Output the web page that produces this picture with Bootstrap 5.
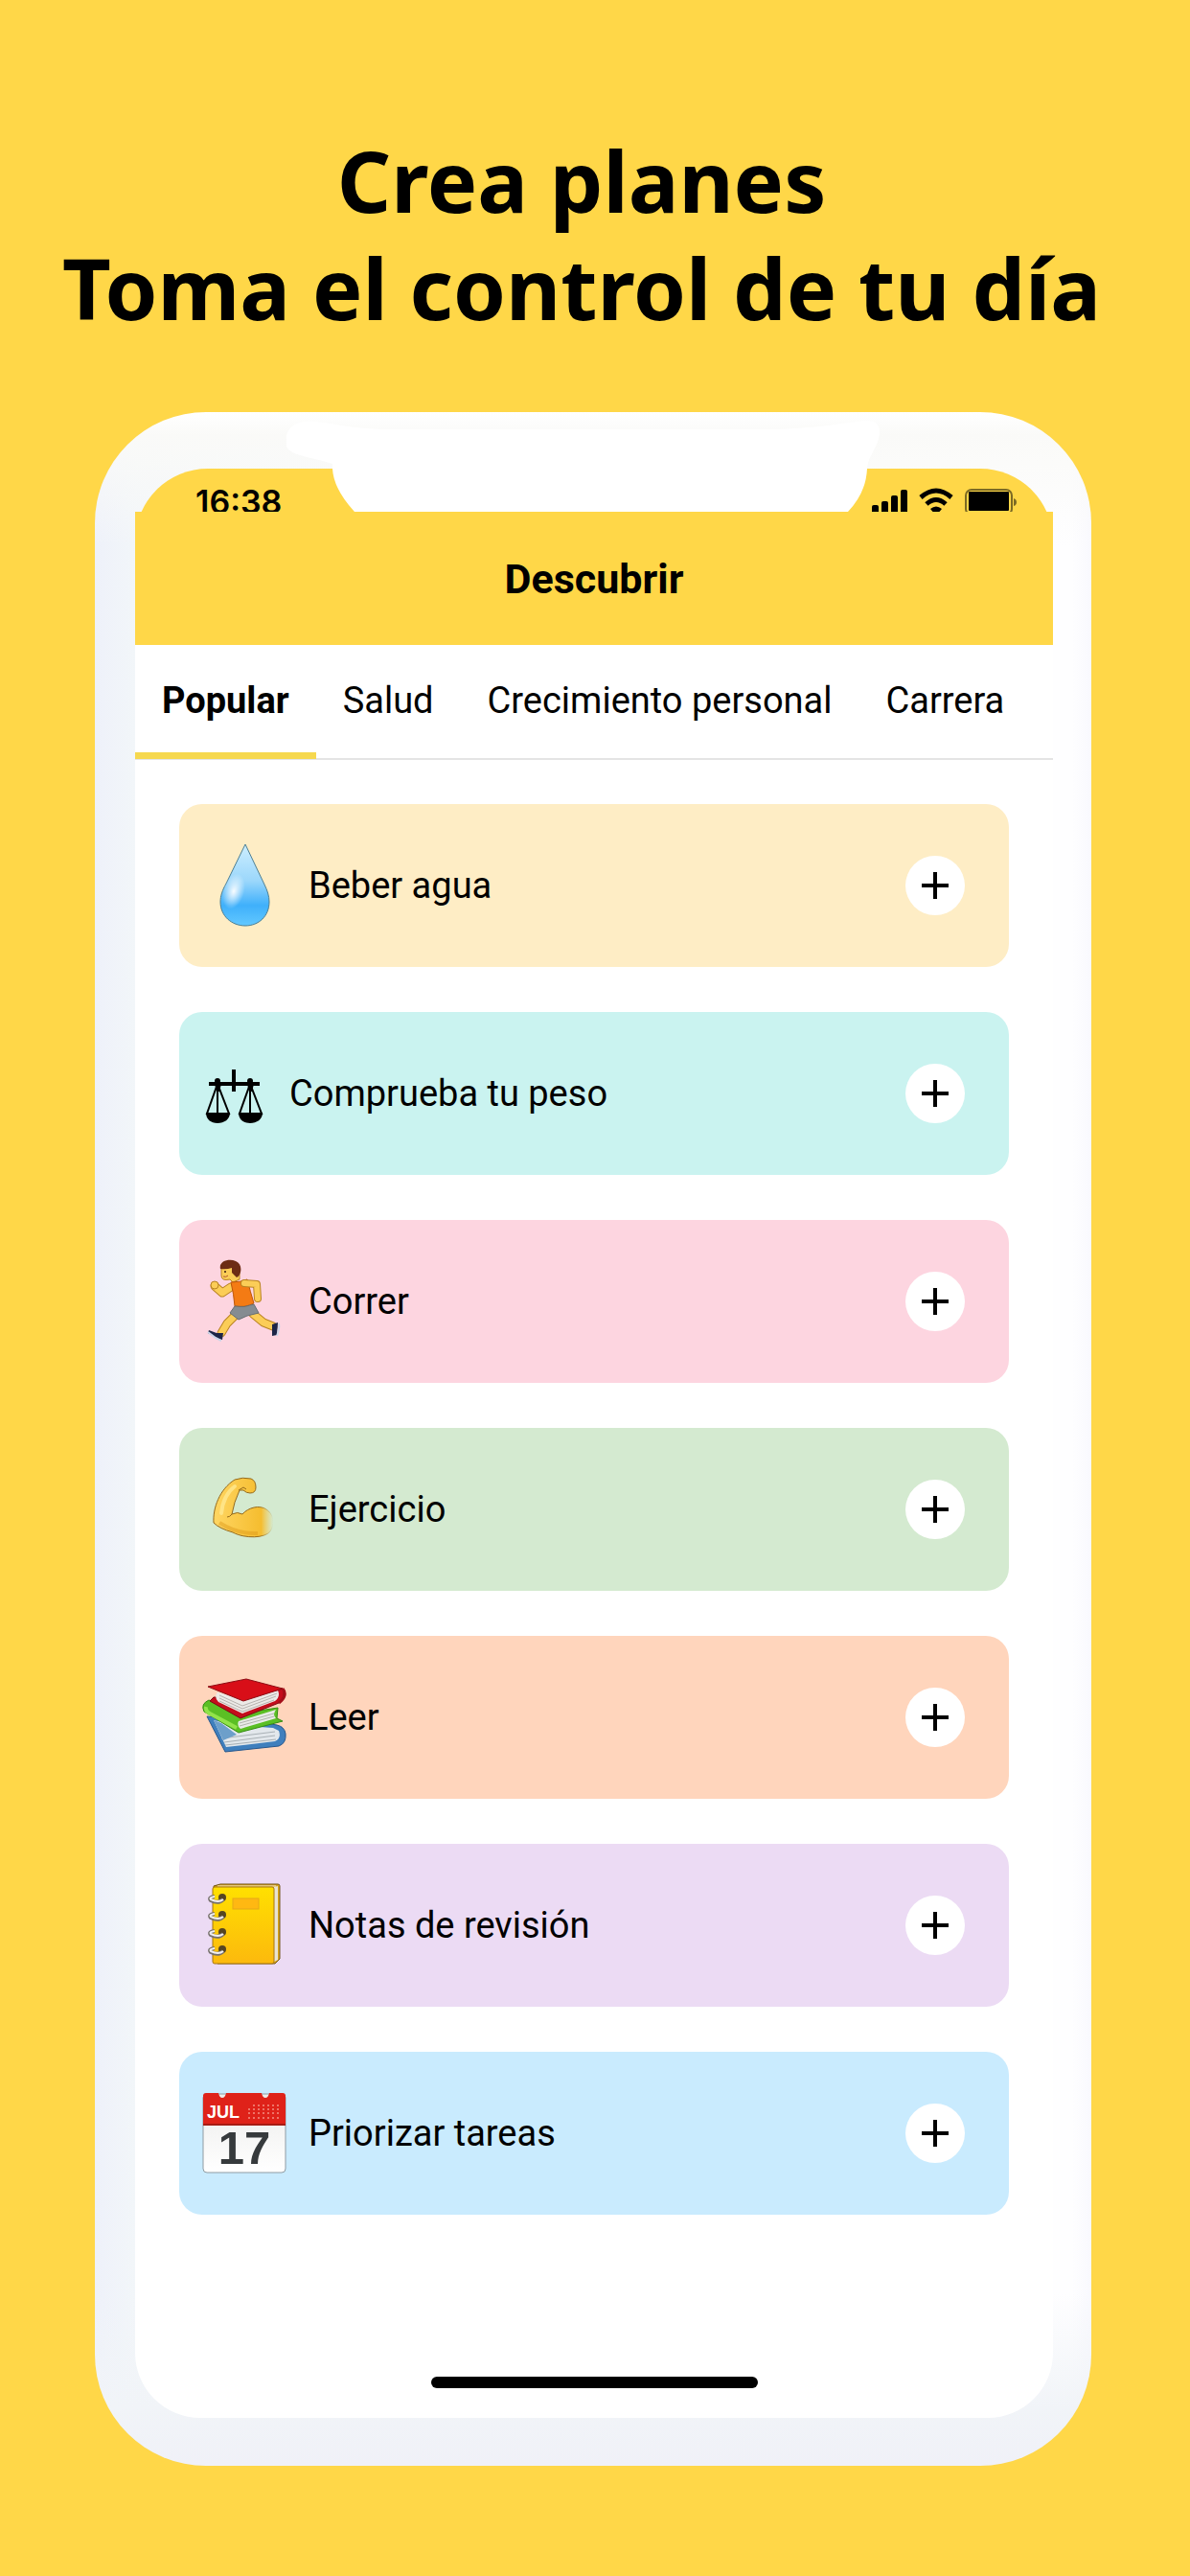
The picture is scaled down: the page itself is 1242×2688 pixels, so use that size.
<!DOCTYPE html>
<html lang="es">
<head>
<meta charset="utf-8">
<meta name="viewport" content="width=device-width, initial-scale=1">
<title>Crea planes</title>
<link href="https://cdn.jsdelivr.net/npm/bootstrap@5.3.0/dist/css/bootstrap.min.css" rel="stylesheet">
<style>
  :root { --sun: #ffd748; }
  body { background: var(--sun); color: #000; font-family: Roboto, sans-serif; }
  .promo { padding: 132px 28px 0 0; font-family: "Noto Sans", "Open Sans", sans-serif; font-size: 88px; line-height: 112px; font-weight: 700; }
  .stage { padding: 74px 103px 115px 99px; }
  .phone { padding: 59px 40px 50px 42px; border-radius: 116px;
    background: linear-gradient(to bottom, #fff 0, #fafaf8 24px, rgba(250,250,248,0) 140px),
      linear-gradient(to top, #f0f1f8 0, #f1f4f8 60px, rgba(241,244,248,0) 180px),
      linear-gradient(to right, #eef1fa 0, #f2f6f9 42px, #fefeff 50%, #fefeff 98%, #f9f9fe 100%); }
  .status-clip { height: 45px; overflow: hidden; }
  .status-bar { height: 80px; padding: 17px 37px 0 63px; border-radius: 76px 76px 0 0; background: var(--sun); }
  .clock { font-family: Inter, sans-serif; font-size: 34px; line-height: 36px; font-weight: 600; }
  .notch { top: 0; left: 50%; transform: translateX(-50%); }
  .screen { background: #fff; border-radius: 0 0 68px 68px; overflow: hidden; }
  .app-title { background: var(--sun); padding: 46px 0 45px; font-size: 43px; line-height: 48px; font-weight: 700; }
  .tabs { border-bottom: 2px solid #e4e4e4; }
  .tabs .nav-link { padding: 35px 28px 31px; font-size: 38px; line-height: 46px; color: #000; border-bottom: 7px solid transparent; white-space: nowrap; margin-bottom: -1px; }
  .tabs .nav-link.active { font-weight: 700; border-bottom-color: #f6d84f; }
  .plans { padding: 46px 46px 0; gap: 47px; }
  .plan { min-height: 170px; padding: 0 46px 0 24px; border-radius: 24px; font-size: 38px; line-height: 46px; gap: 23px; }
  .add-btn { width: 62px; height: 62px; background: #fff; }
  .tint-cream { background: #feedc5; } .tint-aqua { background: #caf3f0; }
  .tint-pink { background: #fdd5e0; } .tint-green { background: #d4ead0; }
  .tint-peach { background: #ffd5bc; } .tint-lilac { background: #ecdbf4; }
  .tint-sky { background: #c9ebfe; }
  .home-zone { padding: 169px 0 31px; }
  .home-bar { width: 341px; height: 12px; background: #000; }
</style>
</head>
<body>
<h1 class="promo text-center m-0">Crea planes<br>Toma el control de tu día</h1>
<main class="stage">
  <div class="phone position-relative">
    <div class="status-clip">
      <div class="status-bar d-flex justify-content-between align-items-start">
        <span class="clock">16:38</span>
        <svg width="153" height="32" viewBox="0 0 153 32" role="img" aria-label="Señal, wifi y batería">
          <rect x="1" y="21" width="7" height="11" rx="2"/><rect x="11" y="17" width="7" height="15" rx="2"/><rect x="21" y="11" width="7" height="21" rx="2"/><rect x="31" y="5" width="7" height="27" rx="2"/>
          <g fill="none" stroke="#000" stroke-width="5"><path d="M52 13Q68 -1 84 13"/><path d="M58 20Q68 11 78 20"/></g><path d="M62 25Q68 20 74 25L68 32Z"/>
          <rect x="99" y="5" width="48" height="26" rx="6" fill="none" stroke="#7c6a24" stroke-width="2"/><rect x="102" y="7" width="42" height="20" rx="1"/><path d="M149 14Q152 15 152 18T149 22Z" fill="#7c6a24"/>
        </svg>
      </div>
    </div>
    <svg class="notch position-absolute" width="640" height="104" viewBox="0 0 640 104" aria-hidden="true">
      <path fill="#fff" d="M18 10C40 8 60 18 110 18H500C550 18 590 10 604 9Q620 8 619 23C617 38 607 45 606 59Q605 84 586 104H71Q49 80 48 59V54C32 48 4 46 0 36Q-4 14 18 10Z"/>
    </svg>
    <div class="screen">
      <h2 class="app-title text-center m-0">Descubrir</h2>
      <nav class="tabs nav flex-nowrap" aria-label="Categorías">
        <a class="nav-link active" aria-current="page" href="#">Popular</a>
        <a class="nav-link" href="#">Salud</a>
        <a class="nav-link" href="#">Crecimiento personal</a>
        <a class="nav-link" href="#">Carrera</a>
      </nav>
      <ul class="plans list-unstyled d-flex flex-column m-0">
        <li class="plan tint-cream d-flex align-items-center">
          <svg width="88" height="88" viewBox="0 0 88 88" aria-hidden="true">
            <defs><linearGradient id="wg" x1="0" y1="0" x2="0" y2="1"><stop offset="0" stop-color="#cdeeff"/><stop offset=".45" stop-color="#9bd7fb"/><stop offset=".75" stop-color="#3fb0fb"/><stop offset="1" stop-color="#62c8ff"/></linearGradient>
            <radialGradient id="ws"><stop offset="0" stop-color="#fff" stop-opacity=".95"/><stop offset="1" stop-color="#fff" stop-opacity="0"/></radialGradient></defs>
            <path d="M45 1L65 43C68 49 70 55 70 61C70 76 59 86 45 86S19 76 19 61C19 55 21 49 25 42Z" fill="url(#wg)" stroke="#4d7f94" stroke-width="1"/>
            <ellipse cx="33" cy="50" rx="11" ry="19" fill="url(#ws)" transform="rotate(16 33 50)"/>
          </svg>
          <span class="flex-grow-1">Beber agua</span>
          <button type="button" class="add-btn btn rounded-circle p-0 border-0 d-flex align-items-center justify-content-center" aria-label="Añadir Beber agua"><svg width="28" height="28" viewBox="0 0 28 28"><path d="M14 0V28M0 14H28" stroke="#000" stroke-width="4"/></svg></button>
        </li>
        <li class="plan tint-aqua d-flex align-items-center">
          <svg width="68" height="88" viewBox="0 0 68 88" aria-hidden="true">
            <path d="M7 34H60" stroke="#000" stroke-width="4"/><path d="M33 19V42" stroke="#000" stroke-width="4"/>
            <g id="pan"><circle cx="16" cy="31" r="3"/><path d="M13 34H20L18 42H15Z"/><path d="M16 34L5 65H28ZM16 34V65" fill="none" stroke="#000" stroke-width="2"/><path d="M4 64H29C29 71 23 75 16 75S4 71 4 64Z"/></g>
            <use href="#pan" x="34"/>
          </svg>
          <span class="flex-grow-1">Comprueba tu peso</span>
          <button type="button" class="add-btn btn rounded-circle p-0 border-0 d-flex align-items-center justify-content-center" aria-label="Añadir Comprueba tu peso"><svg width="28" height="28" viewBox="0 0 28 28"><path d="M14 0V28M0 14H28" stroke="#000" stroke-width="4"/></svg></button>
        </li>
        <li class="plan tint-pink d-flex align-items-center">
          <svg width="88" height="88" viewBox="0 0 88 88" aria-hidden="true">
            <g fill="none" stroke-linejoin="round" stroke-linecap="round">
              <g stroke="#b98322" stroke-width="9"><path d="M30 29L21 35L13 28"/><path d="M36 57L26 67L20 77"/><path d="M53 57L64 66L74 70"/></g>
              <g stroke="#fbcd57" stroke-width="7"><path d="M30 29L21 35L13 28"/><path d="M36 57L26 67L20 77"/><path d="M53 57L64 66L74 70"/></g>
            </g>
            <circle cx="13" cy="27" r="4" fill="#fbcd57" stroke="#b98322"/>
            <path d="M20 9V17Q20 23 29 21L32 24L39 21V8Z" fill="#fbcd57" stroke="#b98322"/>
            <path d="M19 10C17 2 28 -1 35 2C43 5 41 17 36 19L31 14L31 9Q25 11 19 10Z" fill="#6d2c14"/>
            <circle cx="24" cy="13" r="1" fill="#3a1b10"/><path d="M22 18Q25 19 27 17" fill="none" stroke="#b4552c"/>
            <path d="M30 24Q40 24 47 21Q50 33 54 46Q44 51 34 49Q33 36 30 24Z" fill="#f47b14" stroke="#bd5608"/>
            <path d="M44 25L57 26L58 41" fill="none" stroke="#b98322" stroke-width="8" stroke-linecap="round" stroke-linejoin="round"/><path d="M44 25L57 26L58 41" fill="none" stroke="#fbcd57" stroke-width="6" stroke-linecap="round" stroke-linejoin="round"/>
            <path d="M34 49Q44 51 54 47L59 56L47 59L38 63L29 56Z" fill="#858c91" stroke="#666e73"/>
            <path d="M7 74L15 77L22 77L21 84L16 83L6 77Z" fill="#1c2547"/><path d="M6 76L14 82L20 85" fill="none" stroke="#cbd5e8" stroke-width="2"/>
            <path d="M73 68L79 66L78 79L73 80Z" fill="#1c2547"/><path d="M80 67Q81 72 78 80" fill="none" stroke="#cbd5e8" stroke-width="2"/>
          </svg>
          <span class="flex-grow-1">Correr</span>
          <button type="button" class="add-btn btn rounded-circle p-0 border-0 d-flex align-items-center justify-content-center" aria-label="Añadir Correr"><svg width="28" height="28" viewBox="0 0 28 28"><path d="M14 0V28M0 14H28" stroke="#000" stroke-width="4"/></svg></button>
        </li>
        <li class="plan tint-green d-flex align-items-center">
          <svg width="88" height="88" viewBox="0 0 88 88" aria-hidden="true">
            <defs><linearGradient id="ag" x1="0" y1="0" x2="1" y2="0"><stop offset="0" stop-color="#ffd663"/><stop offset=".8" stop-color="#f5bd2f"/><stop offset="1" stop-color="#f5c84f" stop-opacity="0"/></linearGradient>
            <linearGradient id="as" x1="0" y1="0" x2="1" y2="0"><stop offset="0" stop-color="#94691b"/><stop offset=".75" stop-color="#94691b"/><stop offset="1" stop-color="#94691b" stop-opacity="0"/></linearGradient></defs>
            <path d="M34 13Q42 10 51 12Q56 14 56 21Q56 27 50 27Q46 27 43 24H39Q33 37 31 49Q37 46 42 49C48 42 60 39 67 44C75 49 76 60 71 67C66 74 45 75 32 68Q18 64 12 58C11 43 18 23 34 13Z" fill="url(#ag)" stroke="url(#as)" stroke-width="1"/>
            <path d="M18 58Q37 70 58 69" fill="none" stroke="#dc9616" stroke-width="4" opacity=".45"/><path d="M20 48Q22 29 34 20" fill="none" stroke="#ffec9a" stroke-width="4" opacity=".7" stroke-linecap="round"/>
            <path d="M38 24L43 21L46 23M31 49Q29 52 26 52" fill="none" stroke="#94691b"/>
          </svg>
          <span class="flex-grow-1">Ejercicio</span>
          <button type="button" class="add-btn btn rounded-circle p-0 border-0 d-flex align-items-center justify-content-center" aria-label="Añadir Ejercicio"><svg width="28" height="28" viewBox="0 0 28 28"><path d="M14 0V28M0 14H28" stroke="#000" stroke-width="4"/></svg></button>
        </li>
        <li class="plan tint-peach d-flex align-items-center">
          <svg width="88" height="88" viewBox="0 0 88 88" aria-hidden="true">
            <path d="M5 43L24 80L80 74Q88 71 87 61Q86 54 78 52L40 46Z" fill="#3f7fbd" stroke="#27578c"/>
            <path d="M12 47L25 75L76 69Q83 66 80 58L74 55L32 52Z" fill="#e3e8ec"/><path d="M23 70L76 63M24 73L77 67M20 66L76 59" stroke="#a8b0b5" fill="none"/><path d="M12 47L22 68L36 62L20 50Z" fill="#6d9fca"/>
            <path d="M7 26Q-2 30 2 38L38 60L84 48L78 45L79 34L40 40Z" fill="#5bbf24" stroke="#358d13"/>
            <path d="M38 48L77 36Q73 41 77 45L40 56Q36 53 38 48Z" fill="#e9ebe8"/><path d="M39 50L75 40M39 53L75 43" stroke="#b0b3ac"/>
            <path d="M4 33Q3 37 8 40L36 55" stroke="#92e34a" stroke-width="4" fill="none"/>
            <path d="M12 23L8 27L40 45L80 29Q88 22 84 14L46 24Z" fill="#c40d1c" stroke="#7d0b13"/>
            <path d="M16 18Q12 23 17 28L42 40L76 27Q82 22 79 16L43 25Z" fill="#eceae7"/><path d="M18 24L42 35L77 22M18 27L42 38L75 26M18 21L42 32L78 19" fill="none" stroke="#b6b2ae"/>
            <path d="M6 12L46 4L84 14L43 27Z" fill="#d80e18" stroke="#8d0d14"/><path d="M84 14Q90 21 80 29" fill="none" stroke="#a50f19" stroke-width="3"/>
          </svg>
          <span class="flex-grow-1">Leer</span>
          <button type="button" class="add-btn btn rounded-circle p-0 border-0 d-flex align-items-center justify-content-center" aria-label="Añadir Leer"><svg width="28" height="28" viewBox="0 0 28 28"><path d="M14 0V28M0 14H28" stroke="#000" stroke-width="4"/></svg></button>
        </li>
        <li class="plan tint-lilac d-flex align-items-center">
          <svg width="88" height="88" viewBox="0 0 88 88" aria-hidden="true">
            <defs><linearGradient id="ng" x1="0" y1="0" x2="0" y2="1"><stop offset="0" stop-color="#ffe000"/><stop offset="1" stop-color="#fcb90d"/></linearGradient></defs>
            <path d="M12 3L19 1H79Q81 1 81 3V79L76 84H16Z" fill="#d7a31b" stroke="#73571a"/><path d="M75 4L79 3V80L75 82Z" fill="#e9e3d1"/><path d="M16 3H77" stroke="#f0e9d5"/>
            <rect x="11" y="4" width="64" height="80" rx="2" fill="url(#ng)" stroke="#a77611"/>
            <rect x="32" y="16" width="27" height="11" fill="#ffb812" stroke="#e5a818"/>
            <g id="ring"><circle cx="21" cy="15" r="4" fill="#554522"/><path d="M22 17Q17 22 9 18Q6 15 13 14" fill="none" stroke="#77716d" stroke-width="4"/><path d="M22 17Q17 21 9 17Q7 15 13 14" fill="none" stroke="#f1eff0" stroke-width="2"/></g>
            <use href="#ring" y="18"/><use href="#ring" y="36"/><use href="#ring" y="54"/>
          </svg>
          <span class="flex-grow-1">Notas de revisión</span>
          <button type="button" class="add-btn btn rounded-circle p-0 border-0 d-flex align-items-center justify-content-center" aria-label="Añadir Notas de revisión"><svg width="28" height="28" viewBox="0 0 28 28"><path d="M14 0V28M0 14H28" stroke="#000" stroke-width="4"/></svg></button>
        </li>
        <li class="plan tint-sky d-flex align-items-center">
          <svg width="88" height="88" viewBox="0 0 88 88" role="img" aria-label="17 de julio">
            <defs><linearGradient id="cg" x1="0" y1="0" x2="0" y2="1"><stop offset="0" stop-color="#ececea"/><stop offset="1" stop-color="#fff"/></linearGradient></defs>
            <rect x="1" y="3" width="86" height="82" rx="4" fill="url(#cg)" stroke="#8f9ba2"/>
            <path d="M1 35V5Q1 2 4 2H17Q18 7 21 7T25 2H62Q63 7 66 7T70 2H84Q87 2 87 5V35Z" fill="#df2219"/><path d="M1 35H87" stroke="#a71b14" stroke-width="2"/>
            <text x="5" y="28" font-family="Liberation Sans, sans-serif" font-size="18" font-weight="700" fill="#fff">JUL</text>
            <g stroke="#ee7468" stroke-width="2" stroke-dasharray="2 3"><path d="M53 15H82M48 19H82M48 23H82M48 28H82"/></g>
            <text x="44" y="76" text-anchor="middle" font-family="Liberation Sans, sans-serif" font-size="49" font-weight="700" fill="#363a3c">17</text>
          </svg>
          <span class="flex-grow-1">Priorizar tareas</span>
          <button type="button" class="add-btn btn rounded-circle p-0 border-0 d-flex align-items-center justify-content-center" aria-label="Añadir Priorizar tareas"><svg width="28" height="28" viewBox="0 0 28 28"><path d="M14 0V28M0 14H28" stroke="#000" stroke-width="4"/></svg></button>
        </li>
      </ul>
      <div class="home-zone d-flex justify-content-center"><div class="home-bar rounded-pill"></div></div>
    </div>
  </div>
</main>
<script src="https://cdn.jsdelivr.net/npm/bootstrap@5.3.0/dist/js/bootstrap.bundle.min.js"></script>
</body>
</html>
